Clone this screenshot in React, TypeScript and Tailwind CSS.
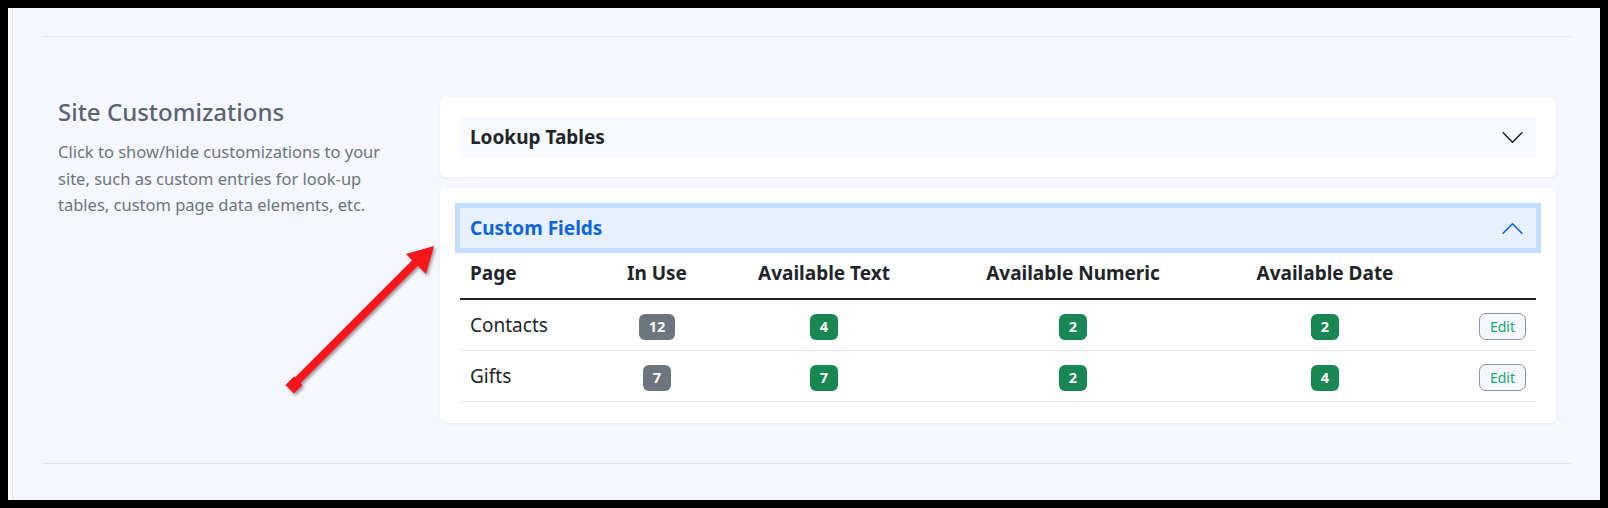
type Row = { page: string; inUse: number; text: number; numeric: number; date: number };

const rows: Row[] = [
  { page: 'Contacts', inUse: 12, text: 4, numeric: 2, date: 2 },
  { page: 'Gifts', inUse: 7, text: 7, numeric: 2, date: 4 },
];

const cols = 'grid grid-cols-[130px_134px_200px_298px_206px_1fr] items-center';

function Badge({ value, tone }: { value: number; tone: 'gray' | 'green' }) {
  return (
    <span
      className={`inline-flex h-[26px] items-center rounded-[6px] px-[10px] text-[14.5px] font-bold leading-none text-white ${
        tone === 'gray' ? 'bg-[#6c757d]' : 'bg-[#198754]'
      }`}
    >
      {value}
    </span>
  );
}

// accordion chevron, same drawing as the bootstrap icon
function Chevron({ up, color }: { up?: boolean; color: string }) {
  return (
    <svg width="25" height="25" viewBox="0 0 16 16" fill="none" stroke={color} strokeWidth="1" strokeLinecap="round" strokeLinejoin="round">
      <path d={up ? 'M2 11L8 5L14 11' : 'M2 5L8 11L14 5'} />
    </svg>
  );
}

function Arrow() {
  return (
    <svg className="pointer-events-none absolute left-0 top-0" width="1608" height="508">
      <defs>
        <filter id="arrowShadow" x="-20%" y="-20%" width="140%" height="140%">
          <feDropShadow dx="1.5" dy="2" stdDeviation="1.5" floodColor="#000" floodOpacity="0.4" />
        </filter>
      </defs>
      <g filter="url(#arrowShadow)" fill="#f5131b">
        <line x1="296" y1="382" x2="419" y2="259" stroke="#f5131b" strokeWidth="8" />
        <rect x="-6" y="-6" width="12" height="12" transform="translate(294 385) rotate(45)" />
        <polygon points="434,246 406,254 426,274" />
      </g>
    </svg>
  );
}

export default function App() {
  return (
    <div className="relative h-[508px] w-[1608px] bg-black p-2 font-['Noto_Sans',sans-serif] text-[#212529]">
      <div className="flex h-full bg-[#f5f6fe]">
        <div className="w-[4px] bg-[#fbfbff]" />
        <div className="w-px bg-[#e2e3ed]" />
        <div className="flex-1 pl-[30px] pr-[29px] pt-[28px]">
          <div className="border-t border-[#dfe2e8]" />

          <div className="flex pb-[40px] pt-[60px]">
            <div className="w-[397px] pl-[15px]">
              <h2 className="text-[24px] font-medium leading-[30px] text-[#5b6373]">Site Customizations</h2>
              <p className="mt-[12px] whitespace-nowrap text-[16.5px] leading-[26.5px] text-[#6c757d]">
                Click to show/hide customizations to your
                <br />
                site, such as custom entries for look-up
                <br />
                tables, custom page data elements, etc.
              </p>
            </div>

            <div className="flex flex-1 flex-col gap-[11px] pr-[15px]">
              <div className="rounded-[6px] bg-white p-[20px] shadow-[0_1px_3px_rgba(0,0,0,0.06)]">
                <div className="flex h-[40px] items-center justify-between bg-[#f8f9fe] pl-[10px] pr-[11px]">
                  <span className="text-[19px] font-bold">Lookup Tables</span>
                  <Chevron color="#212529" />
                </div>
              </div>

              <div className="rounded-[6px] bg-white px-[20px] pb-[21px] pt-[20px] shadow-[0_1px_3px_rgba(0,0,0,0.06)]">
                <div className="flex h-[40px] items-center justify-between bg-[#e6f0ff] pl-[10px] pr-[11px] ring-[5px] ring-[#c2dbfe]">
                  <span className="text-[19px] font-bold text-[#0c63e4]">Custom Fields</span>
                  <Chevron up color="#0c63e4" />
                </div>

                <div className={`${cols} h-[52px] border-b-2 border-[#212529] text-[19px] font-bold`}>
                  <div className="pl-[10px]">Page</div>
                  <div className="text-center">In Use</div>
                  <div className="text-center">Available Text</div>
                  <div className="text-center">Available Numeric</div>
                  <div className="text-center">Available Date</div>
                  <div />
                </div>

                {rows.map((r) => (
                  <div key={r.page} className={`${cols} h-[51px] border-b border-[#e3e4e8] text-[19px]`}>
                    <div className="pl-[10px]">{r.page}</div>
                    <div className="flex justify-center pt-[3px]">
                      <Badge value={r.inUse} tone="gray" />
                    </div>
                    <div className="flex justify-center pt-[3px]">
                      <Badge value={r.text} tone="green" />
                    </div>
                    <div className="flex justify-center pt-[3px]">
                      <Badge value={r.numeric} tone="green" />
                    </div>
                    <div className="flex justify-center pt-[3px]">
                      <Badge value={r.date} tone="green" />
                    </div>
                    <div className="flex justify-end pr-[10px] pt-[3px]">
                      <button className="flex h-[27px] items-center rounded-[7px] border border-[#8c95a7] bg-[#f6f7fe] px-[10px] text-[14px] text-[#1aa673]">
                        Edit
                      </button>
                    </div>
                  </div>
                ))}
              </div>
            </div>
          </div>

          <div className="border-t border-[#dfe2e8]" />
        </div>
      </div>
      <Arrow />
    </div>
  );
}
